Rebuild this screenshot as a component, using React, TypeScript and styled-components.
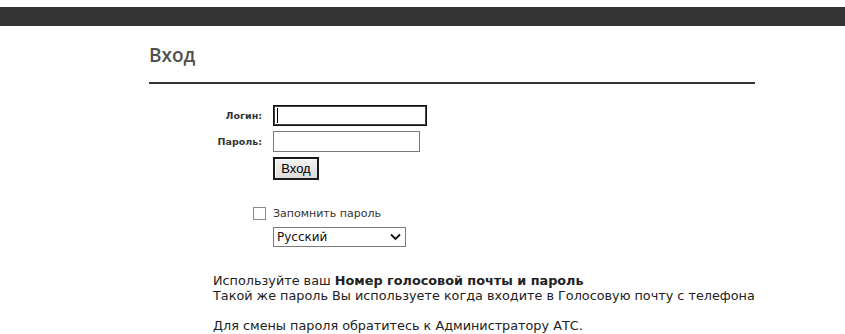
import React from 'react';
import styled, { createGlobalStyle } from 'styled-components';

const GlobalStyle = createGlobalStyle`
  html, body {
    margin: 0;
    padding: 0;
    background: #fff;
  }
  body {
    font-family: "DejaVu Sans", Verdana, sans-serif;
    color: #333;
  }
`;

const Page = styled.div`
  padding-top: 7px;
`;

const TopBar = styled.div`
  height: 19px;
  background-color: #333;
`;

const Content = styled.div`
  margin-left: 149px;
  width: 606px;
`;

const Title = styled.h1`
  margin: 0;
  padding-top: 16px;
  height: 40px;
  font-family: "Open Sans", sans-serif;
  font-size: 19px;
  font-weight: 600;
  line-height: 26px;
  color: #505050;
`;

const Rule = styled.div`
  height: 2px;
  background-color: #333;
`;

const FormGrid = styled.div`
  display: grid;
  grid-template-columns: 113px auto;
  column-gap: 11px;
  row-gap: 5px;
  margin-top: 21px;
  align-items: center;
  justify-items: start;
`;

const Label = styled.label`
  justify-self: end;
  font-family: "DejaVu Sans", Verdana, sans-serif;
  font-size: 9.5px;
  font-weight: bold;
  color: #333;
`;

const Field = styled.div`
  position: relative;
`;

const Caret = styled.span`
  position: absolute;
  left: 4px;
  top: 3px;
  width: 1px;
  height: 15px;
  background: #000;
`;

const TextInput = styled.input<{ $width: number; $focused?: boolean }>`
  box-sizing: border-box;
  display: block;
  width: ${p => p.$width}px;
  height: 21px;
  margin: 0;
  padding: 1px 3px;
  border: 1px solid ${p => (p.$focused ? '#111' : '#7a7a7a')};
  box-shadow: ${p => (p.$focused ? 'inset 0 0 0 1px #444' : 'none')};
  font-family: "Liberation Sans", Arial, sans-serif;
  font-size: 13px;
  outline: none;
  background: #fff;
`;

const SubmitButton = styled.button`
  box-sizing: border-box;
  width: 46px;
  height: 23px;
  margin: 0;
  padding: 0;
  border: 2px solid #1a1a1a;
  box-shadow: inset 1px 1px 0 #fff;
  background: linear-gradient(#f2f2f2, #dcdcdc);
  font-family: "Liberation Sans", Arial, sans-serif;
  font-size: 13px;
  color: #000;
`;

const RememberRow = styled.label`
  display: flex;
  align-items: center;
  gap: 7px;
  margin-top: 27px;
  margin-left: 104px;
  font-family: "DejaVu Sans", Verdana, sans-serif;
  font-size: 11px;
  color: #333;
`;

const CheckBox = styled.span`
  box-sizing: border-box;
  width: 13px;
  height: 13px;
  border: 1px solid #8a8a8a;
  background: #fff;
`;

const SelectWrap = styled.div`
  position: relative;
  width: 133px;
  margin-top: 7px;
  margin-left: 124px;
`;

const LangSelect = styled.select`
  box-sizing: border-box;
  display: block;
  width: 133px;
  height: 20px;
  margin: 0;
  padding: 0 0 0 3px;
  appearance: none;
  border: 1px solid #7a7a7a;
  border-radius: 0;
  background: #fff;
  font-family: "DejaVu Sans", Verdana, sans-serif;
  font-size: 12px;
  color: #111;
`;

const Chevron = styled.svg`
  position: absolute;
  right: 5px;
  top: 6px;
  pointer-events: none;
`;

const Info = styled.div`
  width: max-content;
  margin-top: 26px;
  margin-left: 64px;
  font-family: "DejaVu Sans", Verdana, sans-serif;
  font-size: 12.8px;
  line-height: 15px;
  white-space: nowrap;
  color: #222;

  p {
    margin: 0;
  }

  p + p {
    margin-top: 15px;
  }

  b {
    font-weight: bold;
  }
`;

const App: React.FC = () => {
  return (
    <Page>
      <GlobalStyle />
      <TopBar />
      <Content>
        <Title>Вход</Title>
        <Rule />
        <FormGrid>
          <Label htmlFor="login">Логин:</Label>
          <Field>
            <TextInput id="login" $width={154} $focused />
            <Caret />
          </Field>
          <Label htmlFor="password">Пароль:</Label>
          <TextInput id="password" type="password" $width={147} />
          <span />
          <SubmitButton>Вход</SubmitButton>
        </FormGrid>
        <RememberRow>
          <CheckBox />
          Запомнить пароль
        </RememberRow>
        <SelectWrap>
          <LangSelect defaultValue="ru">
            <option value="ru">Русский</option>
            <option value="en">English</option>
          </LangSelect>
          <Chevron width="11" height="8" viewBox="0 0 11 8">
            <path d="M1 1.5 L5.5 6 L10 1.5" fill="none" stroke="#111" strokeWidth="1.8" />
          </Chevron>
        </SelectWrap>
        <Info>
          <p>
            Используйте ваш <b>Номер голосовой почты и пароль</b>
            <br />
            Такой же пароль Вы используете когда входите в Голосовую почту с телефона
          </p>
          <p>Для смены пароля обратитесь к Администратору АТС.</p>
        </Info>
      </Content>
    </Page>
  );
};

export default App;
